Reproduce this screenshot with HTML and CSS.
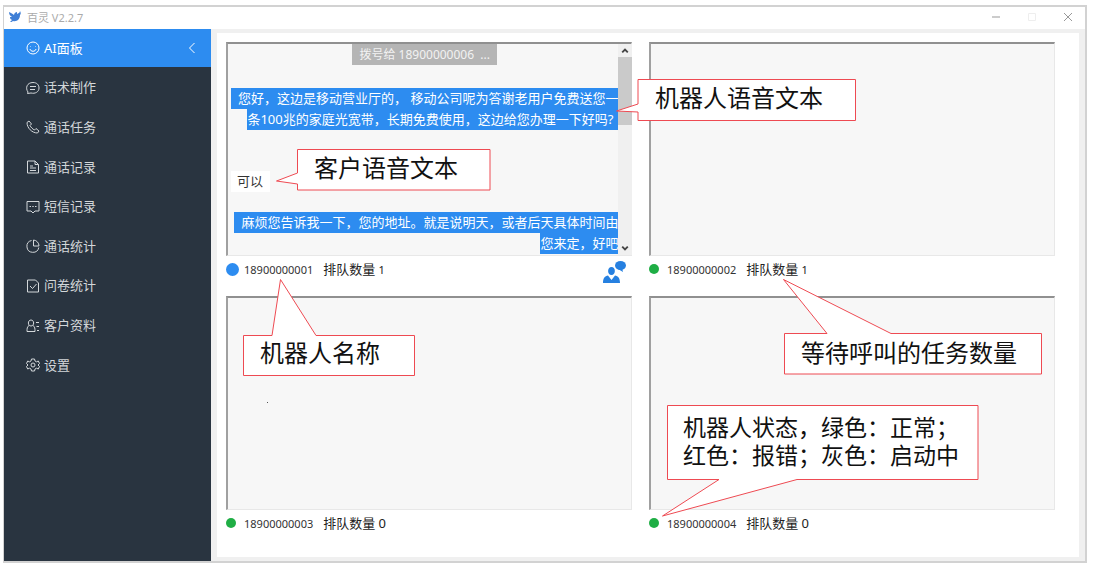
FILE: index.html
```html
<!DOCTYPE html>
<html lang="zh-CN">
<head>
<meta charset="utf-8">
<title>百灵 V2.2.7</title>
<link rel="stylesheet" href="styles.css">
</head>
<body>
<div class="window">
  <header class="titlebar">
    <svg class="logo" viewBox="0 0 12 12"><path d="M0 1C2 2 4 3 5 4C5 2 7 1 8 1L8 3C9 2 11 2 11 0C12 2 12 3 11 4C11 8 8 11 4 10C3 11 2 11 1 11L3 9C1 8 1 7 1 6L3 6C1 5 0 3 0 1Z"/></svg>
    <span class="app-name">百灵 V2.2.7</span>
    <div class="controls">
      <button aria-label="最小化"><svg viewBox="0 0 10 10"><path d="M1 5H9"/></svg></button>
      <button class="disabled" aria-label="最大化" disabled><svg viewBox="0 0 10 10"><path d="M1.5 1.5H8.5V8.5H1.5Z"/></svg></button>
      <button aria-label="关闭"><svg viewBox="0 0 10 10"><path d="M1 1L9 9M9 1L1 9"/></svg></button>
    </div>
  </header>
  <div class="body">
    <nav class="sidebar">
      <a class="item active" href="#">
        <svg class="icon" viewBox="0 0 14 14"><circle cx="7" cy="7" r="6"/><path d="M4 8C4.500 11 9.500 11 10 8M4.500 5.500V6M9.500 5.500V6"/></svg>
        <span>AI面板</span>
        <svg class="chevron" viewBox="0 0 8 12"><path d="M6.500 1L1.500 6L6.500 11"/></svg>
      </a>
      <div class="menu">
        <a class="item" href="#"><svg class="icon" viewBox="0 0 14 14"><path d="M2 11C-1 7 1 1.500 7 1.500C11 1.500 13 4 13 7C13 11 9 13 5 12L1.500 12.500ZM4 5.500H10M4 8.500H9"/></svg><span>话术制作</span></a>
        <a class="item" href="#"><svg class="icon" viewBox="0 0 14 14"><path d="M1 2.500L3 1L5.500 4L4 5.500C5 7.500 6.500 9 8.500 10L10 8.500L13 11L11.500 13C6 13 1 8 1 2.500Z"/></svg><span>通话任务</span></a>
        <a class="item" href="#"><svg class="icon" viewBox="0 0 14 14"><path d="M1.500 1H9L12.500 4.500V13H1.500ZM9 1V4.500H12.500M4 6H7M4 8H10M4 10.500H10"/></svg><span>通话记录</span></a>
        <a class="item" href="#"><svg class="icon" viewBox="0 0 14 14"><path d="M1 1.500H13V11H9L7 13L5 11H1Z"/><path d="M3.500 6.500H5M6.300 6.500H7.700M9 6.500H10.500"/></svg><span>短信记录</span></a>
        <a class="item" href="#"><svg class="icon" viewBox="0 0 14 14"><path d="M5.500 1.500A6 6 0 1 0 12.800 8.500M7.500 1V7H13A6 6 0 0 0 7.500 1Z"/></svg><span>通话统计</span></a>
        <a class="item" href="#"><svg class="icon" viewBox="0 0 14 14"><path d="M1.500 1H9.500L12.500 4V13H1.500ZM4 7L6.500 9.500L10.500 5"/></svg><span>问卷统计</span></a>
        <a class="item" href="#"><svg class="icon" viewBox="0 0 14 14"><path d="M5 1C8.500 1 8.500 7 5 7C1.500 7 1.500 1 5 1ZM3 6.500C1 7.500 1 10 1 12.500H9C9 10 9 7.500 7 6.500M10 3.500H13M10.500 7.500H13M11 11.500H13"/></svg><span>客户资料</span></a>
        <a class="item" href="#"><svg class="icon" viewBox="0 0 14 14"><path d="M5.500 1H8.500L9 3L10.500 3.800L12.300 3L13.500 5.500L12 7L13.500 8.500L12.300 11L10.500 10.200L9 11L8.500 13H5.500L5 11L3.500 10.200L1.700 11L.5 8.500L2 7L.5 5.500L1.700 3L3.500 3.800L5 3Z"/><circle cx="7" cy="7" r="2"/></svg><span>设置</span></a>
      </div>
    </nav>
    <main class="main">
      <div class="board">
        <section class="robot">
          <div class="screen chat">
            <div class="messages">
              <div class="notice">拨号给 18900000006&nbsp; ...</div>
              <div class="bubble robot-says">
                <span class="line first">您好，这边是移动营业厅的， 移动公司呢为答谢老用户免费送您一</span>
                <span class="line last">条100兆的家庭光宽带，长期免费使用，这边给您办理一下好吗?</span>
              </div>
              <div class="bubble customer-says">可以</div>
              <div class="bubble robot-says">
                <span class="line first">麻烦您告诉我一下，您的地址。就是说明天，或者后天具体时间由</span>
                <span class="line">您来定，好吧</span>
              </div>
            </div>
            <div class="scrollbar">
              <svg viewBox="0 0 14 14"><path d="M4 9L7 6L10 9"/></svg>
              <div class="thumb"></div>
              <svg viewBox="0 0 14 14"><path d="M4 5L7 8L10 5"/></svg>
            </div>
          </div>
          <footer class="status">
            <i class="dot busy"></i><span class="number">18900000001</span><span class="queue">排队数量 <span class="count">1</span></span>
            <svg class="agent" viewBox="0 0 24 22"><ellipse cx="18.500" cy="4.500" rx="5.500" ry="4.500"/><path d="M20 7L21 11L16 8ZM9.500 6C14 6 14 14 9.500 14C5 14 5 6 9.500 6ZM1 22C1 17 3 15 6 14.500L9.500 19L13 14.500C16 15 18 17 18 22Z"/></svg>
          </footer>
          <div class="callout speech-robot">
            <svg viewBox="0 0 240 42"><path d="M22 .5H239.500V41.500H22V33L.5 32L22 25Z"/></svg>
            <span>机器人语音文本</span>
          </div>
          <div class="callout speech-customer">
            <svg viewBox="0 0 215 42"><path d="M21.500 .5H214V41H21.500V35L.5 32L21.500 24Z"/></svg>
            <span>客户语音文本</span>
          </div>
        </section>
        <section class="robot">
          <div class="screen"></div>
          <footer class="status"><i class="dot"></i><span class="number">18900000002</span><span class="queue">排队数量 <span class="count">1</span></span></footer>
        </section>
        <section class="robot">
          <div class="screen"></div>
          <footer class="status"><i class="dot"></i><span class="number">18900000003</span><span class="queue">排队数量 <span class="count large">0</span></span></footer>
          <div class="callout robot-name">
            <svg viewBox="0 0 172 97"><path d="M.5 56.500H29L37.500 .5L73 56.500H171.500V96.500H.5Z"/></svg>
            <span>机器人名称</span>
          </div>
          <i class="speck"></i>
        </section>
        <section class="robot">
          <div class="screen"></div>
          <footer class="status"><i class="dot"></i><span class="number">18900000004</span><span class="queue">排队数量 <span class="count large">0</span></span></footer>
          <div class="callout queue-size">
            <svg viewBox="0 0 259 96"><path d="M1.500 54.500H44L.5 .5L108 54.500H258.500V95H1.500Z"/></svg>
            <span>等待呼叫的任务数量</span>
          </div>
          <div class="callout robot-state">
            <svg viewBox="0 0 317 112"><path d="M5.500 .5H316V74.500H135L.5 111L57 74.500H5.500Z"/></svg>
            <span>机器人状态，绿色：正常；<br>红色：报错；灰色：启动中</span>
          </div>
        </section>
      </div>
    </main>
  </div>
</div>
</body>
</html>
```
FILE: styles.css
```css
* { box-sizing: border-box; }

body {
  margin: 0;
  min-height: 100vh;
  display: flex;
  padding: 5px 6px 3px 3px;
  background: #fff;
  font: 13px/21px "Noto Sans", "Noto Sans CJK SC", sans-serif;
  color: #333;
}

.window {
  flex: 1;
  display: flex;
  flex-direction: column;
  border: 2px solid #d2d2d2;
  border-left-width: 1px;
}

.titlebar {
  height: 22px;
  display: flex;
  align-items: center;
  padding: 0 12px 2px 5px;
}
.logo { width: 12px; height: 12px; fill: #3f7fd6; }
.app-name { margin-left: 6px; font-size: 11px; color: #aaa; }
.controls { margin-left: auto; display: flex; gap: 26px; }
.controls button {
  width: 10px;
  height: 10px;
  padding: 0;
  border: 0;
  background: none;
}
.controls svg { display: block; fill: none; stroke: #999; }
.controls .disabled svg { stroke: #eee; }

.body { flex: 1; display: flex; }

.sidebar { width: 207px; flex: none; background: #293440; }
.menu {
  display: grid;
  grid-auto-rows: 1fr;
  height: 317px;
  margin-top: 1px;
}
.item {
  display: flex;
  align-items: center;
  padding: 0 15px 0 22px;
  color: #d3d7da;
  text-decoration: none;
}
.item.active { height: 38px; background: #2d8cf0; color: #fff; }
.item span { margin-left: 4px; }
.icon { width: 14px; height: 14px; fill: none; stroke: currentColor; }
.chevron { width: 8px; height: 12px; margin-left: auto; fill: none; stroke: #fff; }

.main {
  flex: 1;
  min-width: 0;
  display: flex;
  padding: 4px 6px;
  background: #f0f0f0;
}
.board {
  flex: 1;
  display: grid;
  grid-template-columns: 1fr 1fr;
  grid-auto-rows: 1fr;
  gap: 12px 17px;
  padding: 9px 24px 19px 9px;
  background: #fff;
}
.robot { position: relative; display: flex; flex-direction: column; min-width: 0; }
.screen {
  flex: 1;
  background: #f7f7f7;
  border: 1px solid #e8e8e8;
  border-top: 2px solid #909090;
  border-left: 2px solid #a0a0a0;
}

.chat { display: flex; }
.messages { flex: 1; display: flex; flex-direction: column; padding-left: 3px; color: #fff; }
.notice { align-self: center; padding: 0 7px; background: #b5b5b5; color: #f2f2f2; font-size: 12px; }
.robot-says {
  display: flex;
  flex-direction: column;
  align-items: flex-end;
  margin-top: 20px;
  white-space: nowrap;
}
.notice + .robot-says { margin-top: 23px; }
.line { background: #2d8cf0; }
.line.first { padding-left: 7px; }
.line.last { padding-right: 5px; }
.customer-says {
  align-self: flex-start;
  margin-top: 41px;
  padding: 0 7px 0 6px;
  background: #fff;
  color: #333;
}

.scrollbar { width: 14px; display: flex; flex-direction: column; background: #f0f0f0; }
.scrollbar svg { width: 14px; height: 13px; fill: none; stroke: #444; stroke-width: 2; }
.thumb { height: 68px; margin-bottom: auto; background: #cacaca; }

.status { height: 28px; display: flex; align-items: center; padding-bottom: 2px; }
.dot { width: 10px; height: 10px; border-radius: 50%; background: #1fae45; }
.dot.busy { width: 13px; height: 13px; background: #2d8cf0; }
.number { margin-left: 8px; font-size: 11px; }
.dot.busy + .number { margin-left: 5px; }
.queue { margin-left: 10px; color: #222; }
.count { font-size: 11px; }
.count.large { font-size: 13px; }
.agent { width: 24px; height: 22px; margin: 6px 6px 0 auto; fill: #2680e0; }

/* Annotation balloons lie over the panels */
.callout {
  position: absolute;
  z-index: 1;
  font-size: 24px;
  line-height: 28px;
  color: #111;
  white-space: nowrap;
}
.callout svg {
  position: absolute;
  inset: 0;
  width: 100%;
  height: 100%;
  fill: #fff;
  stroke: #ee4a52;
}
.callout span { position: relative; display: block; }
.speech-robot { top: 37px; right: -224px; width: 240px; height: 42px; padding: 5px 0 0 39px; }
.speech-customer { top: 107px; left: 50px; width: 215px; height: 42px; padding: 5px 0 0 38px; }
.robot-name { top: -17px; left: 17px; width: 172px; height: 97px; padding: 60px 0 0 17px; }
.queue-size { top: -17px; left: 134px; width: 259px; height: 96px; padding: 60px 0 0 18px; }
.robot-state { top: 109px; left: 13px; width: 317px; height: 112px; padding: 8px 0 0 21px; font-size: 23px; }
.speck { position: absolute; top: 106px; left: 41px; width: 1px; height: 1px; background: #555; }
```
